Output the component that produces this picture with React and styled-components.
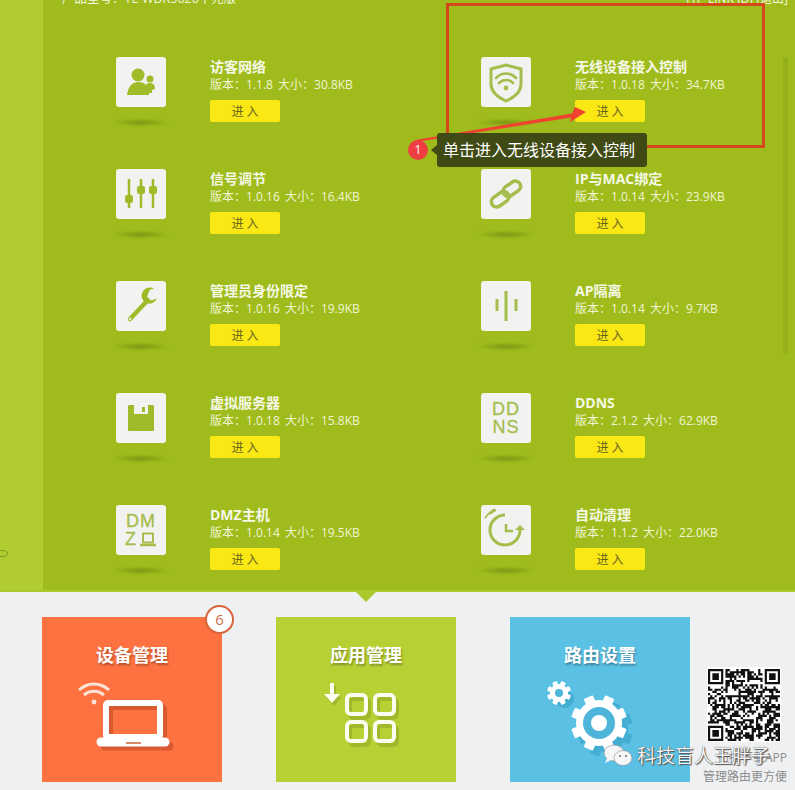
import React from "react";
import styled, { createGlobalStyle } from "styled-components";

const iconFill = "#9fbb2a";
const iconLine = "#a4bd4c";

const GlobalStyle = createGlobalStyle`
  html, body {
    margin: 0;
    padding: 0;
    background: #eff0f2;
    font-family: "Open Sans", "Noto Sans CJK SC", sans-serif;
  }
`;

const PeopleIcon = () => (
  <svg width="50" height="50" viewBox="0 0 50 50">
    <circle cx="22" cy="18" r="6.5" fill={iconFill} />
    <path d="M11 38c1-8 5-13 11-13s9 3 11 7v6z" fill={iconFill} />
    <circle cx="34" cy="22" r="3.5" fill={iconFill} />
    <path d="M29 36v-5c0-3 2-5 5-5s5 2 5 5v1l-3 1v3z" fill={iconFill} />
  </svg>
);

const SlidersIcon = () => (
  <svg width="50" height="50" viewBox="0 0 50 50">
    <g stroke={iconFill} strokeWidth="2.5">
      <path d="M13 10v29M25 10v29M37 10v29" />
    </g>
    <rect x="9" y="26" width="8" height="8" rx="2" fill={iconFill} />
    <rect x="21" y="17" width="8" height="8" rx="2" fill={iconFill} />
    <rect x="33" y="17" width="8" height="8" rx="2" fill={iconFill} />
  </svg>
);

const ShieldIcon = () => (
  <svg width="50" height="50" viewBox="0 0 50 50" fill="none">
    <path d="M25 8l15 4v15c0 7-6 13-15 17-9-4-15-10-15-17V12z" stroke={iconLine} strokeWidth="3" />
    <path d="M15 21c6-6 14-6 20 0M18 26c4-4 10-4 14 0" stroke={iconLine} strokeWidth="2.6" strokeLinecap="round" />
    <circle cx="25" cy="31" r="2.4" fill={iconLine} />
  </svg>
);

const LinkIcon = () => (
  <svg width="50" height="50" viewBox="0 0 50 50" fill="none">
    <g stroke={iconLine} strokeWidth="3.5">
      <rect x="9.500" y="25" width="19" height="10.500" rx="5.250" transform="rotate(-35 19 30)" />
      <rect x="21.500" y="14.500" width="19" height="10.500" rx="5.250" transform="rotate(-35 31 20)" />
    </g>
  </svg>
);

const WrenchIcon = () => (
  <svg width="50" height="50" viewBox="0 0 50 50" fill="none">
    <path d="M14 38l17-18" stroke={iconFill} strokeWidth="4.500" strokeLinecap="round" />
    <path d="M38 8a8 8 0 1 0 3 9.500l-6 2-4-4 3-7z" fill={iconFill} />
    <circle cx="14" cy="38" r="1.200" fill="#f2f3f0" />
  </svg>
);

const FloppyIcon = () => (
  <svg width="50" height="50" viewBox="0 0 50 50">
    <rect x="12" y="12" width="26" height="26" rx="1" fill={iconFill} />
    <rect x="18" y="12" width="14" height="9" fill="#f2f3f0" />
    <rect x="26" y="14" width="3" height="5" fill={iconFill} />
  </svg>
);

const BarsIcon = () => (
  <svg width="50" height="50" viewBox="0 0 50 50">
    <path d="M16 18v12M25 10v30M35 18v12" stroke={iconLine} strokeWidth="3" />
  </svg>
);

const ClockIcon = () => (
  <svg width="50" height="50" viewBox="0 0 50 50" fill="none">
    <path d="M39 25a15 15 0 1 1-15-15" stroke={iconLine} strokeWidth="3" />
    <path d="M34 25l5-5 5 5z" fill={iconLine} />
    <path d="M25 19v7h7" stroke={iconLine} strokeWidth="2.500" />
    <path d="M9 9c2-2 4-3 6-4M4 13c3-4 6-7 10-9" stroke={iconLine} strokeWidth="1.800" />
  </svg>
);

const SmallLaptop = () => (
  <svg width="18" height="15" viewBox="0 0 18 15" fill="none">
    <rect x="4" y="1.500" width="10" height="9" stroke={iconLine} strokeWidth="2" />
    <path d="M1 13h16" stroke={iconLine} strokeWidth="2.500" />
  </svg>
);

const gearTeeth = (cx, cy, r, w, n) =>
  Array.from({ length: n }, (_, i) => (
    <rect
      key={i}
      x={cx - w / 2}
      y={cy - r}
      width={w}
      height={r}
      rx="1"
      transform={`rotate(${(360 / n) * i + 22.5} ${cx} ${cy})`}
    />
  ));

const LaptopArt = () => (
  <svg width="180" height="100" viewBox="0 0 180 100" fill="none">
    <g stroke="#d95a30" transform="translate(4 4)">
      <rect x="64" y="31" width="54" height="34" rx="2" strokeWidth="6" />
      <path d="M59 70h64" strokeWidth="9" strokeLinecap="round" />
    </g>
    <path d="M37 18c9-8 21-8 30 0M42 23c6-5 14-5 20 0" stroke="#fbe3d8" strokeWidth="3" />
    <circle cx="52" cy="30" r="2.400" fill="#fbe3d8" />
    <rect x="64" y="31" width="54" height="34" rx="2" stroke="#fff" strokeWidth="6" />
    <path d="M59 70h64" stroke="#fff" strokeWidth="9" strokeLinecap="round" />
    <path d="M84 71h15" stroke="#d98a68" strokeWidth="2" />
  </svg>
);

const AppsArt = () => {
  const boxes = [
    [71, 23],
    [99, 23],
    [71, 50],
    [99, 50],
  ];
  return (
    <svg width="180" height="100" viewBox="0 0 180 100" fill="none">
      <g stroke="#a0b82b" strokeWidth="4" transform="translate(3 4)">
        {boxes.map(([x, y]) => (
          <rect key={`${x}-${y}`} x={x} y={y} width="19" height="19" rx="4" />
        ))}
      </g>
      <path d="M54 11h4v11h6l-8 9-8-9h6z" fill="#a0b82b" transform="translate(2 3)" />
      {boxes.map(([x, y]) => (
        <rect key={`${x}-${y}`} x={x} y={y} width="19" height="19" rx="4" stroke="#fbfdf0" strokeWidth="4" />
      ))}
      <path d="M54 11h4v11h6l-8 9-8-9h6z" fill="#fbfdf0" />
    </svg>
  );
};

const GearArt = () => (
  <svg width="180" height="100" viewBox="0 0 180 100">
    <g fill="#44aed2" transform="translate(6 6)">
      <circle cx="89" cy="51" r="23" />
      {gearTeeth(89, 51, 28, 10, 8)}
      <circle cx="49" cy="21" r="9" />
    </g>
    <g fill="#fff">
      <circle cx="89" cy="51" r="23" />
      {gearTeeth(89, 51, 28, 10, 8)}
      <circle cx="49" cy="21" r="9" />
      {gearTeeth(49, 21, 12, 5, 8)}
    </g>
    <circle cx="89" cy="51" r="16" fill="#4db5d9" />
    <circle cx="89" cy="51" r="8" fill="#fff" />
    <circle cx="49" cy="21" r="4" fill="#4db5d9" />
  </svg>
);

// no real code behind this one, just a believable module pattern
const qrPath = () => {
  const size = 33;
  const finder = (r, c, x, y) => {
    const dx = c - x;
    const dy = r - y;
    if (dx < 0 || dy < 0 || dx > 7 || dy > 7) return null;
    if (dx === 7 || dy === 7) return false;
    if (dx === 0 || dy === 0 || dx === 6 || dy === 6) return true;
    if (dx === 1 || dy === 1 || dx === 5 || dy === 5) return false;
    return true;
  };
  let d = "";
  let seed = 73;
  for (let r = 0; r < size; r++) {
    for (let c = 0; c < size; c++) {
      seed = (seed * 1103515245 + 12345) & 0x7fffffff;
      let on = (seed >> 16) % 100 < 52;
      const a = finder(r, c, 0, 0);
      const b = finder(r, size - 1 - c, 0, 0);
      const e = finder(size - 1 - r, c, 0, 0);
      const f = a ?? b ?? e;
      if (f !== null) on = f;
      if (on) d += `M${c} ${r}h1v1h-1z`;
    }
  }
  return d;
};

const QrCode = () => (
  <svg width="72" height="72" viewBox="0 0 33 33">
    <path d={qrPath()} fill="#111" />
  </svg>
);

const WechatIcon = () => (
  <svg width="30" height="24" viewBox="0 0 30 24">
    <ellipse cx="11" cy="9" rx="10" ry="8" fill="#f4f6f7" stroke="#777" strokeWidth="0.500" />
    <path d="M4 14l-2 5 6-3z" fill="#f4f6f7" />
    <ellipse cx="20" cy="14" rx="9" ry="7.500" fill="#f4f6f7" stroke="#777" strokeWidth="0.500" />
    <circle cx="17" cy="12" r="1.100" fill="#777" />
    <circle cx="23" cy="12" r="1.100" fill="#777" />
  </svg>
);

const plugins = [
  { name: "访客网络", version: "1.1.8", size: "30.8KB", icon: <PeopleIcon /> },
  { name: "无线设备接入控制", version: "1.0.18", size: "34.7KB", icon: <ShieldIcon /> },
  { name: "信号调节", version: "1.0.16", size: "16.4KB", icon: <SlidersIcon /> },
  { name: "IP与MAC绑定", version: "1.0.14", size: "23.9KB", icon: <LinkIcon /> },
  { name: "管理员身份限定", version: "1.0.16", size: "19.9KB", icon: <WrenchIcon /> },
  { name: "AP隔离", version: "1.0.14", size: "9.7KB", icon: <BarsIcon /> },
  { name: "虚拟服务器", version: "1.0.18", size: "15.8KB", icon: <FloppyIcon /> },
  {
    name: "DDNS",
    version: "2.1.2",
    size: "62.9KB",
    icon: (
      <TileLetters>
        <span>DD</span>
        <span>NS</span>
      </TileLetters>
    ),
  },
  {
    name: "DMZ主机",
    version: "1.0.14",
    size: "19.5KB",
    icon: (
      <TileLetters>
        <span>DM</span>
        <span>
          Z <SmallLaptop />
        </span>
      </TileLetters>
    ),
  },
  { name: "自动清理", version: "1.1.2", size: "22.0KB", icon: <ClockIcon /> },
];

function TileLetters({ children }) {
  return <Letters>{children}</Letters>;
}

const App = () => {
  return (
    <Page>
      <GlobalStyle />
      <Top>
        <Sidebar>
          <EdgeMark />
        </Sidebar>
        <Main>
          <Header>
            <span>产品型号：TL-WDR5620千兆版</span>
            <HeaderLinks>[TP-LINK ID] [退出]</HeaderLinks>
          </Header>
          <PluginGrid>
            {plugins.map((p) => (
              <Plugin key={p.name}>
                <TileColumn>
                  <Tile>{p.icon}</Tile>
                  <TileShadow />
                </TileColumn>
                <Info>
                  <Name>{p.name}</Name>
                  <Meta>
                    版本：{p.version} 大小：{p.size}
                  </Meta>
                  <EnterButton>进 入</EnterButton>
                </Info>
              </Plugin>
            ))}
          </PluginGrid>
          <ScrollThumb />
        </Main>
      </Top>

      <Footer>
        <Card $bg="#fe7241">
          <CardTitle>设备管理</CardTitle>
          <LaptopArt />
          <CountBadge>6</CountBadge>
        </Card>
        <Card $bg="#b7d034" $active>
          <CardTitle>应用管理</CardTitle>
          <AppsArt />
        </Card>
        <Card $bg="#5ac1e4">
          <CardTitle>路由设置</CardTitle>
          <GearArt />
        </Card>
        <AppBlock>
          <QrBox>
            <QrCode />
          </QrBox>
          <AppText>扫描下载APP</AppText>
          <AppText>管理路由更方便</AppText>
        </AppBlock>
      </Footer>

      <Highlight />
      <ArrowLayer width="795" height="200" viewBox="0 0 795 200">
        <path d="M415 140L572 113.500 575 107 586 112 570 122 571 117.500 416 142z" fill="#ef4330" />
      </ArrowLayer>
      <StepBadge>1</StepBadge>
      <Tip>单击进入无线设备接入控制</Tip>

      <Watermark>
        <WechatIcon />
        <span>科技盲人王胖子</span>
      </Watermark>
    </Page>
  );
};

const Page = styled.div`
  position: relative;
  width: 795px;
  height: 790px;
  overflow: hidden;
  background: #eff0f2;
`;

const Top = styled.div`
  display: flex;
  height: 590px;
  border-bottom: 2px solid #abc82c;
`;

const Sidebar = styled.div`
  position: relative;
  flex: 0 0 43px;
  background: #b0cc30;
`;

const EdgeMark = styled.div`
  position: absolute;
  left: -4px;
  top: 550px;
  width: 10px;
  height: 5px;
  border: 1px solid #7f9a20;
  border-radius: 50%;
`;

const Main = styled.div`
  position: relative;
  flex: 1;
  background: #9fbc1c;
`;

const Header = styled.div`
  display: flex;
  justify-content: space-between;
  height: 20px;
  margin-top: -11px;
  padding: 0 7px 0 19px;
  color: #f4f7df;
  font-size: 12.500px;
  line-height: 20px;
`;

const HeaderLinks = styled.span`
  font-size: 12px;
`;

const PluginGrid = styled.div`
  display: grid;
  grid-template-columns: 365px 279px;
  grid-auto-rows: 112px;
  margin-top: 48px;
  padding-left: 73px;
`;

const Plugin = styled.div`
  display: flex;
  gap: 44px;
`;

const TileColumn = styled.div`
  display: flex;
  flex-direction: column;
  align-items: center;
  width: 50px;
`;

const Tile = styled.div`
  display: flex;
  align-items: center;
  justify-content: center;
  width: 50px;
  height: 50px;
  flex: none;
  border-radius: 3px;
  background: #f2f3f0;
`;

const TileShadow = styled.div`
  width: 56px;
  height: 7px;
  margin-top: 12px;
  flex: none;
  border-radius: 50%;
  background: radial-gradient(ellipse at center, rgba(95, 115, 15, 0.6) 0%, rgba(95, 115, 15, 0) 75%);
  filter: blur(1px);
`;

const Letters = styled.div`
  display: flex;
  flex-direction: column;
  align-items: center;
  color: ${iconLine};
  font-family: "Liberation Sans", sans-serif;
  font-size: 18px;
  line-height: 18px;
  letter-spacing: 1px;
  -webkit-text-stroke: 0.3px ${iconLine};

  span {
    display: flex;
    align-items: center;
    gap: 2px;
  }
`;

const Info = styled.div`
  display: flex;
  flex-direction: column;
  align-items: flex-start;
  margin-top: 2px;
`;

const Name = styled.div`
  margin-bottom: 2px;
  color: #f6f8e6;
  font-size: 14px;
  font-weight: 700;
  line-height: 15px;
  white-space: nowrap;
`;

const Meta = styled.div`
  color: #f1f5d4;
  font-size: 12px;
  line-height: 17px;
  white-space: pre;
  word-spacing: 2px;
`;

const EnterButton = styled.button`
  width: 70px;
  height: 22px;
  margin-top: 7px;
  padding: 1px 0 0;
  border: 0;
  border-radius: 2px;
  background: #fae815;
  color: #6a6420;
  font-family: inherit;
  font-size: 12px;
  line-height: 21px;
`;

const ScrollThumb = styled.div`
  position: absolute;
  top: 57px;
  right: 7px;
  width: 5px;
  height: 298px;
  border-radius: 3px;
  background: #95b01c;
`;

const Footer = styled.div`
  display: flex;
  align-items: flex-start;
  gap: 54px;
  padding: 25px 0 0 42px;
`;

const Card = styled.div`
  position: relative;
  display: flex;
  flex-direction: column;
  align-items: center;
  width: 180px;
  height: 165px;
  padding-top: 26px;
  box-sizing: border-box;
  background: ${(p) => p.$bg};

  ${(p) =>
    p.$active &&
    `
    &::before {
      content: "";
      position: absolute;
      top: -25px;
      left: 50%;
      margin-left: -10px;
      border-left: 10px solid transparent;
      border-right: 10px solid transparent;
      border-top: 10px solid #abc82c;
    }
  `}
`;

const CardTitle = styled.div`
  height: 24px;
  margin-bottom: 5px;
  color: #fff;
  font-size: 18px;
  font-weight: 700;
  line-height: 24px;
  text-shadow: 1px 2px 2px rgba(0, 0, 0, 0.3);
`;

const CountBadge = styled.div`
  position: absolute;
  top: -12px;
  right: -12px;
  width: 25px;
  height: 25px;
  border: 2px solid #d8653a;
  border-radius: 50%;
  background: #fff;
  color: #cf6f4a;
  font-size: 15px;
  line-height: 25px;
  text-align: center;
`;

const AppBlock = styled.div`
  display: flex;
  flex-direction: column;
  align-items: flex-end;
  width: 84px;
  margin: 50px 0 0 -41px;
`;

const QrBox = styled.div`
  display: flex;
  align-items: center;
  justify-content: center;
  align-self: flex-start;
  width: 74px;
  height: 75px;
  margin: 0 0 6px 4px;
  background: #fff;
`;

const AppText = styled.div`
  color: #8d8d8d;
  font-size: 12px;
  line-height: 19px;
  white-space: nowrap;
`;

const Highlight = styled.div`
  position: absolute;
  left: 446px;
  top: 3px;
  width: 313px;
  height: 139px;
  border: 3px solid #d4491c;
`;

const ArrowLayer = styled.svg`
  position: absolute;
  left: 0;
  top: 0;
`;

const StepBadge = styled.div`
  position: absolute;
  left: 408px;
  top: 140px;
  width: 20px;
  height: 20px;
  border-radius: 50%;
  background: #ef3e42;
  color: #fff;
  font-size: 12px;
  line-height: 20px;
  text-align: center;
`;

const Tip = styled.div`
  position: absolute;
  left: 437px;
  top: 133px;
  width: 210px;
  height: 34px;
  padding-left: 6px;
  box-sizing: border-box;
  border-radius: 3px;
  background: #3f4a14;
  color: #fff;
  font-size: 16px;
  line-height: 34px;

  &::before {
    content: "";
    position: absolute;
    left: -6px;
    top: 12px;
    border-top: 5px solid transparent;
    border-bottom: 5px solid transparent;
    border-right: 6px solid #3f4a14;
  }
`;

const Watermark = styled.div`
  position: absolute;
  left: 603px;
  top: 744px;
  display: flex;
  align-items: center;
  gap: 4px;
  color: #f4f4f4;
  font-size: 19px;
  line-height: 24px;
  white-space: nowrap;
  text-shadow: 0 0 1px #333, 1px 1px 1px #555;
`;

export default App;
